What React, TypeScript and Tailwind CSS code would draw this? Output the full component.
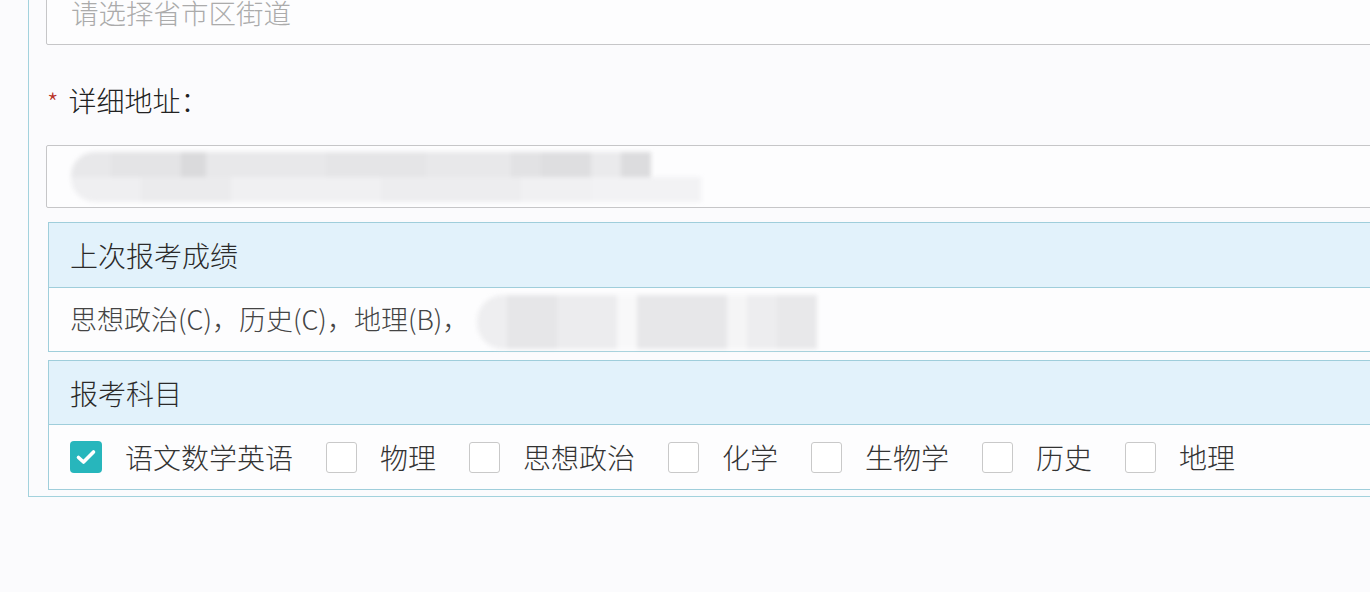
import React from "react";

const subjects = [
  { name: "语文数学英语", checked: true },
  { name: "物理", checked: false },
  { name: "思想政治", checked: false },
  { name: "化学", checked: false },
  { name: "生物学", checked: false },
  { name: "历史", checked: false },
  { name: "地理", checked: false },
];

function Checkbox({ checked }: { checked: boolean }) {
  if (checked) {
    return (
      <span className="flex h-[32px] w-[32px] shrink-0 items-center justify-center rounded-[4px] bg-[#27b6bc]">
        <svg width="22" height="18" viewBox="0 0 22 18" fill="none">
          <path d="M3.5 9.5 L8.5 14 L18.5 4" stroke="#ffffff" strokeWidth="3.6" strokeLinecap="round" strokeLinejoin="round" />
        </svg>
      </span>
    );
  }
  return <span className="h-[31px] w-[31px] shrink-0 rounded-[3px] border border-[#c9c9c9] bg-white" />;
}

export default function App() {
  return (
    <div
      className="relative h-[592px] w-[1370px] overflow-hidden bg-[#fbfbfd] font-light"
      style={{ fontFamily: '"Noto Sans CJK SC", "Microsoft YaHei", sans-serif' }}
    >
      <div className="ml-[28px] mt-[-21px] w-[1420px] border-b border-l border-[#a3d2dd] pb-[6px] pl-[17px]">
        {/* region select input */}
        <div className="flex h-[66px] items-center rounded-[2px] border border-[#c6c6c8] bg-[#fdfdfe] pl-[24px] text-[27.5px] leading-none text-[#ababab]">
          <span className="mt-[2px]">请选择省市区街道</span>
        </div>

        {/* label */}
        <div className="mt-[35px] flex h-[40px] items-center text-[28px] text-[#222]">
          <span className="ml-[1px] mr-[10px] mt-[4px] text-[26px] leading-none text-[#b83227]">*</span>
          <span>详细地址：</span>
        </div>

        {/* detail address input */}
        <div className="mt-[25px] h-[63px] overflow-hidden rounded-[2px] border border-[#c6c6c8] bg-[#fdfdfe] pl-[24px] pt-[6px]">
          <div className="flex h-[50px] w-[650px] flex-col overflow-hidden rounded-l-[24px] blur-[2px]">
            <div className="flex h-[25px]">
              <div className="w-[40px] bg-[#e8e8ea]" />
              <div className="w-[70px] bg-[#e4e4e6]" />
              <div className="w-[25px] bg-[#dadadc]" />
              <div className="w-[120px] bg-[#e8e8ea]" />
              <div className="w-[100px] bg-[#e5e5e7]" />
              <div className="w-[85px] bg-[#e8e8ea]" />
              <div className="w-[30px] bg-[#e2e2e4]" />
              <div className="w-[50px] bg-[#dedee0]" />
              <div className="w-[30px] bg-[#eaeaec]" />
              <div className="w-[30px] bg-[#dcdcde]" />
            </div>
            <div className="flex h-[25px]">
              <div className="w-[70px] bg-[#efeff1]" />
              <div className="w-[90px] bg-[#ebebed]" />
              <div className="w-[150px] bg-[#f0f0f2]" />
              <div className="w-[140px] bg-[#ededef]" />
              <div className="w-[70px] bg-[#f0f0f2]" />
              <div className="w-[110px] bg-[#f2f2f4]" />
            </div>
          </div>
        </div>

        {/* previous scores panel */}
        <div className="ml-[2px] mt-[14px] border border-[#9fcedb]">
          <div className="flex h-[65px] items-center border-b border-[#9fcedb] bg-[#e2f2fb] pl-[21px] text-[28px] text-[#2a2a2a]">
            上次报考成绩
          </div>
          <div className="flex h-[63px] items-center bg-[#fdfdfe] pl-[21px] text-[27px] text-[#444]">
            <span>思想政治(C)，历史(C)，地理(B)，</span>
            <div className="ml-[8px] mt-[4px] flex h-[54px] w-[340px] overflow-hidden rounded-l-[26px] blur-[2px]">
              <div className="w-[30px] bg-[#eeeef0]" />
              <div className="w-[50px] bg-[#e6e6e8]" />
              <div className="w-[60px] bg-[#ececee]" />
              <div className="w-[20px] bg-[#f8f8f9]" />
              <div className="w-[90px] bg-[#e7e7e9]" />
              <div className="w-[20px] bg-[#f5f5f6]" />
              <div className="w-[30px] bg-[#ededef]" />
              <div className="w-[40px] bg-[#e8e8ea]" />
            </div>
          </div>
        </div>

        {/* subjects panel */}
        <div className="ml-[2px] mt-[8px] border border-[#9fcedb]">
          <div className="flex h-[64px] items-center border-b border-[#9fcedb] bg-[#e2f2fb] pl-[21px] text-[28px] text-[#2a2a2a]">
            报考科目
          </div>
          <div className="flex h-[64px] items-center bg-[#fdfdfe] pl-[21px] text-[28px] text-[#333]">
            {subjects.map((s, i) => (
              <div key={s.name} className={`flex items-center ${i > 0 ? "ml-[33px]" : ""}`}>
                <Checkbox checked={s.checked} />
                <span className="ml-[23px] leading-none">{s.name}</span>
              </div>
            ))}
          </div>
        </div>
      </div>
    </div>
  );
}
